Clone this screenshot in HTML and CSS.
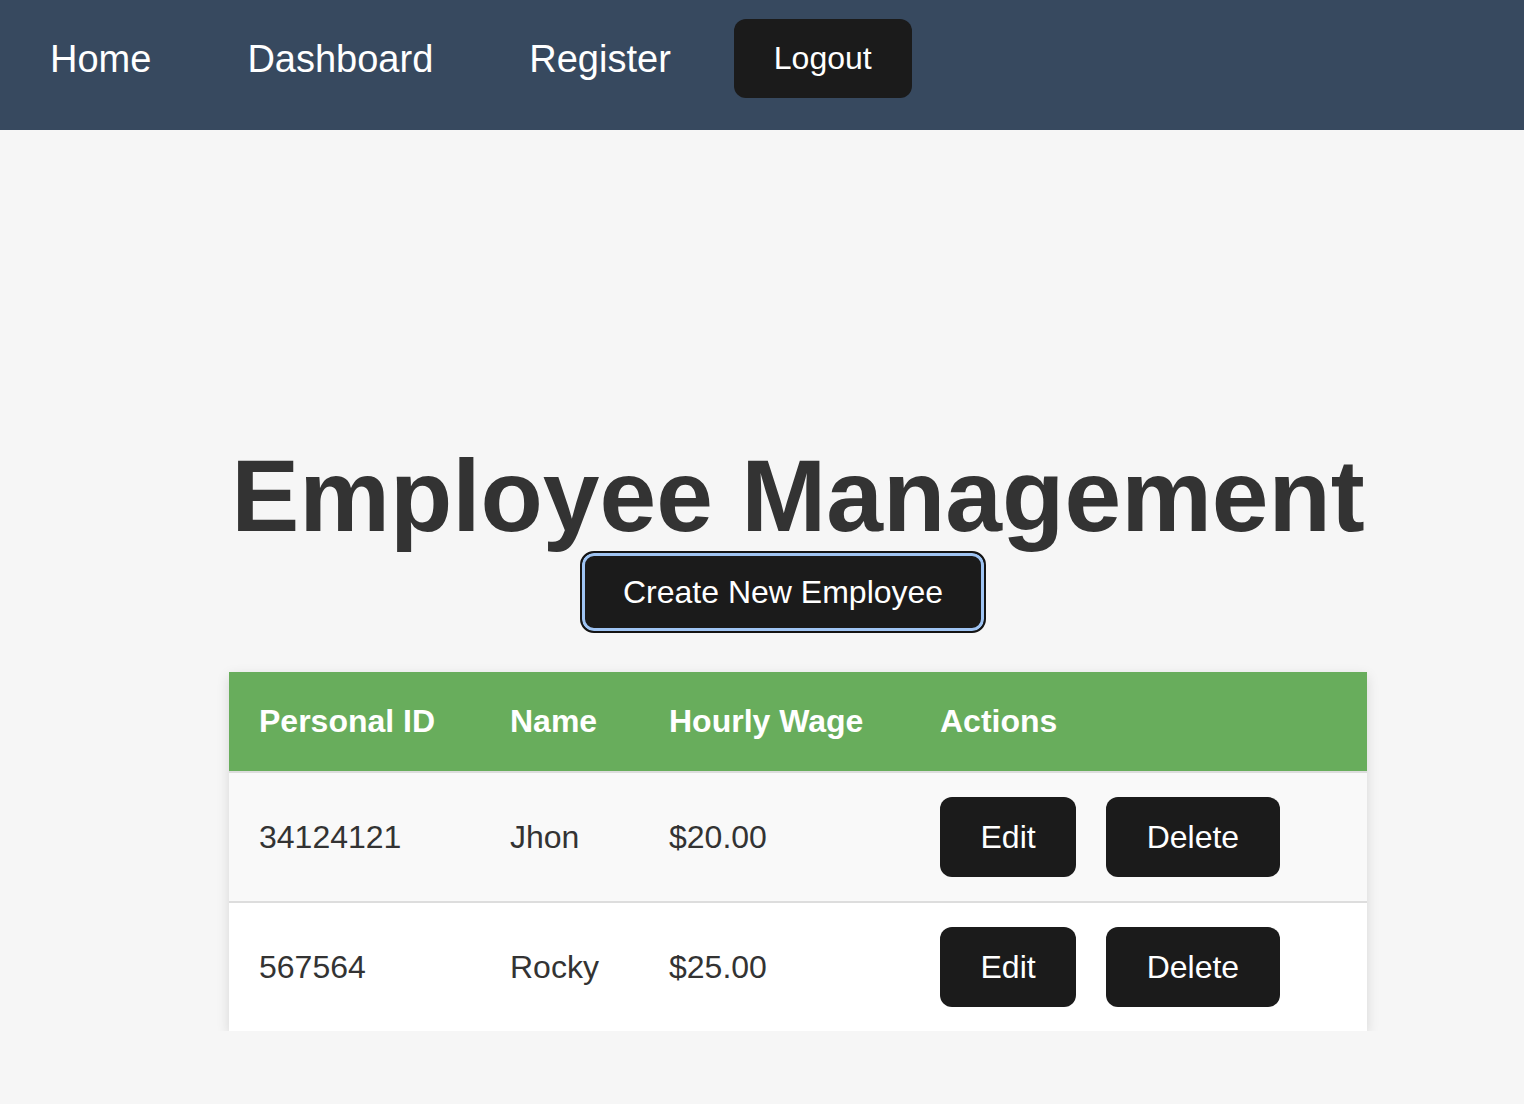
FILE: index.html
```html
<!DOCTYPE html>
<html lang="en">
<head>
<meta charset="utf-8">
<title>Employee Management</title>
<link rel="stylesheet" href="styles.css">
</head>
<body>
<nav class="navbar">
  <a class="nav-link" href="#">Home</a>
  <a class="nav-link" href="#">Dashboard</a>
  <a class="nav-link" href="#">Register</a>
  <button class="btn btn-logout">Logout</button>
</nav>
<main class="container">
  <h1 class="title">Employee Management</h1>
  <button class="btn btn-create">Create New Employee</button>
  <table class="emp-table">
    <colgroup>
      <col class="c1"><col class="c2"><col class="c3"><col class="c4">
    </colgroup>
    <thead>
      <tr><th>Personal ID</th><th>Name</th><th>Hourly Wage</th><th>Actions</th></tr>
    </thead>
    <tbody>
      <tr>
        <td>34124121</td><td>Jhon</td><td>$20.00</td>
        <td><div class="actions"><button class="btn btn-row">Edit</button><button class="btn btn-row">Delete</button></div></td>
      </tr>
      <tr>
        <td>567564</td><td>Rocky</td><td>$25.00</td>
        <td><div class="actions"><button class="btn btn-row">Edit</button><button class="btn btn-row">Delete</button></div></td>
      </tr>
    </tbody>
  </table>
</main>
</body>
</html>
```
FILE: styles.css
```css
html, body {
  margin: 0;
  padding: 0;
}
body {
  background: #f6f6f6;
  font-family: "Liberation Sans", Arial, Helvetica, sans-serif;
  color: #333;
}
.navbar {
  display: flex;
  align-items: center;
  background: #37495f;
  padding: 19px 0 32px 2px;
  height: 79px;
}
.nav-link {
  color: #fff;
  text-decoration: none;
  font-size: 38px;
  padding: 0 48px;
  line-height: 44px;
}
.btn {
  font-family: "Liberation Sans", Arial, Helvetica, sans-serif;
  background: #1b1b1b;
  color: #fff;
  border: none;
  border-radius: 12px;
  font-size: 32px;
  cursor: pointer;
}
.btn-logout {
  margin-left: 15px;
  padding: 20px 40px 21px;
  line-height: 38px;
}
.container {
  width: 1138px;
  margin-left: 229px;
  display: flex;
  flex-direction: column;
  align-items: flex-start;
}
.title {
  width: 100%;
  margin: 309px 0 0;
  font-size: 102px;
  font-weight: bold;
  line-height: 114px;
  text-align: center;
  white-space: nowrap;
  color: #333;
}
.btn-create {
  margin: -2px 0 0 351px;
  padding: 20px 41px;
  line-height: 38px;
  border: 2px solid #141414;
  box-shadow: inset 0 0 0 3px #9fc4f3;
  border-radius: 14px;
}
.emp-table {
  margin-top: 39px;
  width: 1138px;
  border-collapse: collapse;
  table-layout: fixed;
  box-shadow: 0 4px 12px rgba(0, 0, 0, 0.13);
  background: #fff;
}
.c1 { width: 251px; }
.c2 { width: 159px; }
.c3 { width: 271px; }
.c4 { width: 457px; }
.emp-table th {
  background: #68ad5c;
  color: #fff;
  font-size: 32px;
  font-weight: bold;
  text-align: left;
  padding: 31px 30px;
  line-height: 37px;
  border-bottom: 2px solid #dddddd;
}
.emp-table td {
  font-size: 32px;
  color: #333;
  padding: 24px 30px;
  line-height: 36px;
  border-bottom: 2px solid #dddddd;
}
.emp-table tbody tr:nth-child(odd) td {
  background: #f9f9f9;
}
.emp-table tbody tr:last-child td {
  border-bottom: none;
}
.actions {
  display: flex;
  gap: 30px;
}
.btn-row {
  padding: 21px 40.5px;
  line-height: 38px;
}
```
